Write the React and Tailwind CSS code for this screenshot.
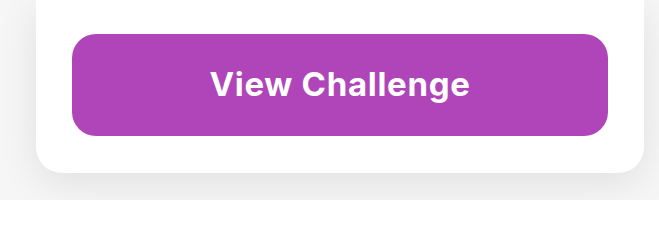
import React from "react";

export default function App() {
    return (
        <div className="w-[659px] h-[200px] overflow-hidden bg-[#f6f6f6] px-[36px]" style={{ fontFamily: "Inter, 'Liberation Sans', sans-serif" }}>
            <div className="bg-white rounded-b-[26px] pt-[34px] pb-[37px] px-[36px] w-[608px] shadow-[0_10px_40px_rgba(0,0,0,0.09)]">
                <button className="w-full h-[102px] rounded-[24px] bg-[#af45b9] text-white text-[33px] font-bold tracking-[0.7px] flex items-center justify-center">
                    View Challenge
                </button>
            </div>
        </div>
    );
}
